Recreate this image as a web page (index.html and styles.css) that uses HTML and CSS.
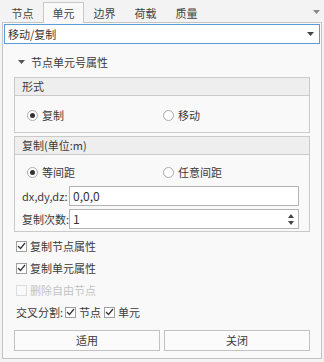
FILE: index.html
```html
<!DOCTYPE html>
<html lang="zh">
<head>
<meta charset="utf-8">
<link rel="stylesheet" href="styles.css">
</head>
<body>
<div class="tabs">
  <div class="tab">节点</div>
  <div class="tab active">单元</div>
  <div class="tab">边界</div>
  <div class="tab">荷载</div>
  <div class="tab">质量</div>
  <div class="tab-spacer"></div>
  <svg class="tab-arrow" width="7" height="4" viewBox="0 0 7 4"><path d="M0 0H7L3.5 4Z" fill="#888"/></svg>
</div>
<div class="panel">
  <div class="combo">
    <span>移动/复制</span>
    <svg width="7" height="4" viewBox="0 0 7 4"><path d="M0 0H7L3.5 4Z" fill="#444"/></svg>
  </div>
  <div class="section-title">
    <svg width="7" height="4" viewBox="0 0 7 4"><path d="M0 0H7L3.5 4Z" fill="#555"/></svg>
    <span>节点单元号属性</span>
  </div>
  <div class="group g1">
    <div class="group-head">形式</div>
    <div class="group-body">
      <div class="radio-row">
        <label class="radio on"><i></i>复制</label>
        <label class="radio"><i></i>移动</label>
      </div>
    </div>
  </div>
  <div class="group g2">
    <div class="group-head">复制(单位:m)</div>
    <div class="group-body">
      <div class="radio-row">
        <label class="radio on"><i></i>等间距</label>
        <label class="radio"><i></i>任意间距</label>
      </div>
      <div class="field">
        <span class="lbl">dx,dy,dz:</span>
        <div class="input">0,0,0</div>
      </div>
      <div class="field">
        <span class="lbl">复制次数:</span>
        <div class="input spin">1
          <svg width="6" height="11" viewBox="0 0 6 11"><path d="M0 4L3 0L6 4Z M0 7L3 11L6 7Z" fill="#444"/></svg>
        </div>
      </div>
    </div>
  </div>
  <div class="checks">
    <label class="check on"><i><svg width="9" height="8" viewBox="0 0 9 8"><path d="M1 4L3.5 6.5L8 1" fill="none" stroke="#333" stroke-width="1.2"/></svg></i>复制节点属性</label>
    <label class="check on"><i><svg width="9" height="8" viewBox="0 0 9 8"><path d="M1 4L3.5 6.5L8 1" fill="none" stroke="#333" stroke-width="1.2"/></svg></i>复制单元属性</label>
    <label class="check disabled"><i></i>删除自由节点</label>
    <div class="cross">
      <span>交叉分割:</span>
      <label class="check on"><i><svg width="9" height="8" viewBox="0 0 9 8"><path d="M1 4L3.5 6.5L8 1" fill="none" stroke="#333" stroke-width="1.2"/></svg></i>节点</label>
      <label class="check on"><i><svg width="9" height="8" viewBox="0 0 9 8"><path d="M1 4L3.5 6.5L8 1" fill="none" stroke="#333" stroke-width="1.2"/></svg></i>单元</label>
    </div>
  </div>
  <div class="buttons">
    <div class="btn">适用</div>
    <div class="btn">关闭</div>
  </div>
</div>
</body>
</html>
```
FILE: styles.css
```css
* { box-sizing: border-box; }
html, body { margin: 0; padding: 0; }
body {
  width: 324px;
  height: 362px;
  background: #f3f3f3;
  font-family: "Noto Sans CJK SC", "Noto Sans", sans-serif;
  font-size: 11px;
  color: #3a3a3a;
  overflow: hidden;
}
.tabs {
  display: flex;
  align-items: flex-end;
  height: 22px;
  padding-left: 2px;
  padding-right: 4px;
}
.tab {
  width: 41px;
  height: 19px;
  line-height: 18px;
  text-align: center;
  color: #444;
  border: 1px solid transparent;
  border-bottom: none;
}
.tab.active {
  background: #f9f9f9;
  border-color: #c8c8c8;
  height: 21px;
  line-height: 20px;
  margin-bottom: -1px;
  position: relative;
  z-index: 1;
}
.tab-spacer { flex: 1; }
.tab-arrow { margin: 0 0 8px 0; }
.panel {
  margin-left: 2px;
  width: 320px;
  height: 337px;
  background: #f9f9f9;
  border: 1px solid #c4c4c4;
  padding: 1px 1px 0 1px;
}
.combo {
  height: 20px;
  border: 1px solid #5a9bd8;
  background: #fff;
  display: flex;
  align-items: center;
  justify-content: space-between;
  padding: 0 5px 0 3px;
  color: #333;
}
.section-title {
  margin-top: 8px;
  height: 20px;
  display: flex;
  align-items: center;
  padding-left: 14px;
}
.section-title svg { margin-right: 6px; }
.group {
  margin: 0 10px 0 10px;
  border: 1px solid #cacaca;
}
.g1 { margin-top: 5px; height: 56px; }
.g2 { margin-top: 3px; height: 96px; }
.group-head {
  height: 18px;
  line-height: 17px;
  background: #eeeeee;
  border-bottom: 1px solid #cacaca;
  padding-left: 7px;
}
.group-body { padding: 0 10px 0 12px; }
.g1 .group-body { padding-top: 9px; }
.g2 .group-body { padding-top: 7px; }
.radio-row {
  display: flex;
  height: 20px;
  align-items: center;
}
.radio {
  display: flex;
  align-items: center;
  width: 140px;
}
.radio i {
  width: 11px;
  height: 11px;
  border-radius: 50%;
  border: 1px solid #a8a8a8;
  background: #fff;
  margin-right: 4px;
  display: flex;
  align-items: center;
  justify-content: center;
}
.radio.on i::after {
  content: "";
  width: 5px;
  height: 5px;
  border-radius: 50%;
  background: #333;
}
.g2 .radio-row { margin-bottom: 4px; }
.field {
  display: flex;
  align-items: center;
  margin-left: -5px;
  height: 20px;
  margin-bottom: 3px;
}
.lbl { width: 47px; white-space: nowrap; }
.input {
  flex: 1;
  height: 20px;
  border: 1px solid #b4b4b4;
  background: #fff;
  padding-left: 3px;
  line-height: 18px;
  color: #333;
  font-size: 12px;
  display: flex;
  align-items: center;
  justify-content: space-between;
  padding-right: 4px;
}
.checks { padding-left: 12px; margin-top: 3px; }
.check {
  display: flex;
  align-items: center;
  height: 22px;
}
.check i {
  width: 11px;
  height: 11px;
  border: 1px solid #a0a0a0;
  background: #fff;
  margin-right: 3px;
  display: flex;
  align-items: center;
  justify-content: center;
}
.check.disabled { color: #c4c4c4; }
.check.disabled i { border-color: #dcdcdc; background: #f9f9f9; }
.cross {
  display: flex;
  align-items: center;
  height: 22px;
}
.cross > span { margin-right: 2px; }
.cross .check { margin-right: 3px; }
.buttons {
  display: flex;
  gap: 4px;
  margin: 7px 10px 0 10px;
}
.btn {
  flex: 1;
  height: 21px;
  line-height: 19px;
  text-align: center;
  border: 1px solid #c2c2c2;
  background: #fbfbfb;
}
```
